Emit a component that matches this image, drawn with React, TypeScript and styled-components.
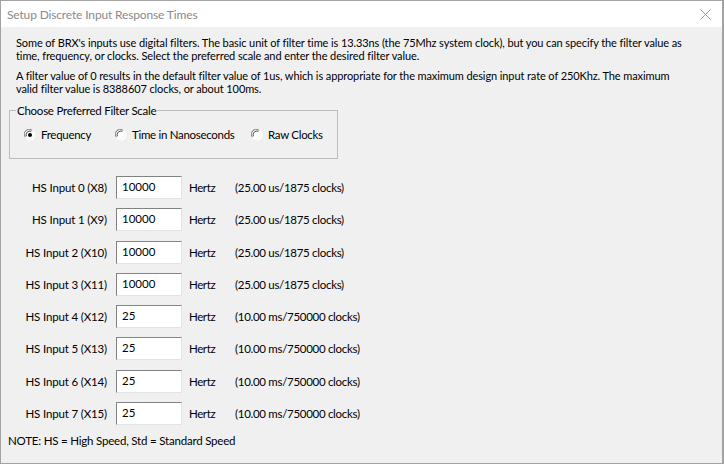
import React from "react";
import styled, { createGlobalStyle } from "styled-components";

const GlobalStyle = createGlobalStyle`
  html, body {
    margin: 0;
    padding: 0;
    background: #f0f0f0;
  }
  body {
    font-family: Lato, "Noto Sans", Arial, sans-serif;
    font-size: 11.5px;
    color: #000;
  }
`;

const Window = styled.div`
  width: 724px;
  height: 464px;
  box-sizing: border-box;
  border: 1px solid #a3a3a3;
  border-right-width: 2px;
  background: #f0f0f0;
  display: flex;
  flex-direction: column;
`;

const TitleBar = styled.div`
  height: 26px;
  flex: none;
  background: #fff;
  display: flex;
  align-items: center;
  justify-content: space-between;
  padding: 0 10px 0 6px;
`;

const Title = styled.span`
  font-size: 12px;
  letter-spacing: -0.15px;
  color: #8a8a8a;
`;

const CloseIcon = styled.svg`
  width: 11px;
  height: 11px;
  margin-right: 1px;
`;

const Body = styled.div`
  flex: 1;
  display: flex;
  flex-direction: column;
  padding: 9px 8px 0 7px;
`;

const Para = styled.p`
  margin: 0 0 7px 8px;
  font-size: 11px;
  letter-spacing: -0.1px;
  line-height: 13px;
  white-space: nowrap;
`;

const GroupBox = styled.fieldset`
  width: 329px;
  box-sizing: border-box;
  margin: 2px 0 0 1px;
  padding: 9px 0 0 0;
  height: 55px;
  border: 1px solid #bcbcbc;
  display: flex;
`;

const Legend = styled.legend`
  padding: 0 1px;
  margin-left: 6px;
  line-height: 13px;
  letter-spacing: -0.25px;
`;

const RadioGroup = styled.div`
  display: flex;
  padding-left: 14px;
  margin-top: 2px;
`;

const RadioLabel = styled.label<{ $width: number }>`
  display: flex;
  align-items: center;
  width: ${(p) => p.$width}px;
  gap: 5px;
  line-height: 13px;
  letter-spacing: -0.3px;
`;

const Rows = styled.div`
  display: grid;
  grid-template-columns: 101px 66px 39px auto;
  column-gap: 7px;
  row-gap: 9.3px;
  align-items: center;
  margin-top: 17px;
`;

const RowLabel = styled.span`
  text-align: right;
  margin-right: 2px;
  letter-spacing: -0.15px;
`;

const Field = styled.div`
  height: 23px;
  box-sizing: border-box;
  background: #fff;
  border-top: 1px solid #828282;
  border-left: 1px solid #828282;
  border-right: 1px solid #e3e3e3;
  border-bottom: 1px solid #e3e3e3;
  padding: 2px 0 0 5px;
  line-height: 15px;
`;

const Unit = styled.span`
  letter-spacing: -0.4px;
`;

const Detail = styled.span`
  letter-spacing: -0.3px;
`;

const Note = styled.div`
  margin-top: 9px;
  margin-left: 0;
  letter-spacing: -0.2px;
`;

const Radio = ({ checked }: { checked?: boolean }) => (
  <svg width="12" height="12" viewBox="0 0 12 12">
    <circle cx="6" cy="6" r="5.5" fill="#fff" />
    <path d="M1.2 8.2 A5 5 0 0 1 8.2 1.2" fill="none" stroke="#7a7a7a" strokeWidth="1" />
    <path d="M2.4 7.3 A3.7 3.7 0 0 1 7.3 2.4" fill="none" stroke="#4a4a4a" strokeWidth="1" />
    <path d="M8.4 2.2 A5 5 0 0 1 2.2 9.8" fill="none" stroke="#f4f4f4" strokeWidth="1" />
    {checked && <circle cx="6" cy="6" r="2" fill="#000" />}
  </svg>
);

const inputs = [
  { name: "HS Input 0 (X8)", value: "10000", detail: "(25.00 us/1875 clocks)" },
  { name: "HS Input 1 (X9)", value: "10000", detail: "(25.00 us/1875 clocks)" },
  { name: "HS Input 2 (X10)", value: "10000", detail: "(25.00 us/1875 clocks)" },
  { name: "HS Input 3 (X11)", value: "10000", detail: "(25.00 us/1875 clocks)" },
  { name: "HS Input 4 (X12)", value: "25", detail: "(10.00 ms/750000 clocks)" },
  { name: "HS Input 5 (X13)", value: "25", detail: "(10.00 ms/750000 clocks)" },
  { name: "HS Input 6 (X14)", value: "25", detail: "(10.00 ms/750000 clocks)" },
  { name: "HS Input 7 (X15)", value: "25", detail: "(10.00 ms/750000 clocks)" },
];

const App = () => {
  return (
    <React.Fragment>
      <GlobalStyle />
      <Window>
        <TitleBar>
          <Title>Setup Discrete Input Response Times</Title>
          <CloseIcon viewBox="0 0 11 11">
            <path d="M0.5 0.5 L10.5 10.5 M10.5 0.5 L0.5 10.5" stroke="#9a9a9a" strokeWidth="1" />
          </CloseIcon>
        </TitleBar>
        <Body>
          <Para>
            Some of BRX's inputs use digital filters. The basic unit of filter time is 13.33ns (the 75Mhz system clock), but you can specify the filter value as
            <br />
            time, frequency, or clocks. Select the preferred scale and enter the desired filter value.
          </Para>
          <Para>
            A filter value of 0 results in the default filter value of 1us, which is appropriate for the maximum design input rate of 250Khz. The maximum
            <br />
            valid filter value is 8388607 clocks, or about 100ms.
          </Para>
          <GroupBox>
            <Legend>Choose Preferred Filter Scale</Legend>
            <RadioGroup>
              <RadioLabel $width={91}>
                <Radio checked />
                Frequency
              </RadioLabel>
              <RadioLabel $width={136}>
                <Radio />
                Time in Nanoseconds
              </RadioLabel>
              <RadioLabel $width={80}>
                <Radio />
                Raw Clocks
              </RadioLabel>
            </RadioGroup>
          </GroupBox>
          <Rows>
            {inputs.map((row) => (
              <React.Fragment key={row.name}>
                <RowLabel>{row.name}</RowLabel>
                <Field>{row.value}</Field>
                <Unit>Hertz</Unit>
                <Detail>{row.detail}</Detail>
              </React.Fragment>
            ))}
          </Rows>
          <Note>NOTE: HS = High Speed, Std = Standard Speed</Note>
        </Body>
      </Window>
    </React.Fragment>
  );
};

export default App;
